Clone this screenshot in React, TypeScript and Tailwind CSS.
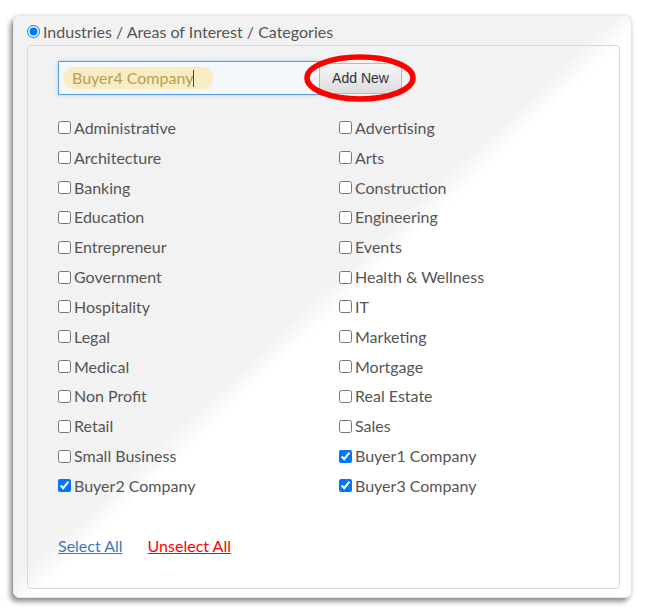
const LEFT = [
  { label: 'Administrative' },
  { label: 'Architecture' },
  { label: 'Banking' },
  { label: 'Education' },
  { label: 'Entrepreneur' },
  { label: 'Government' },
  { label: 'Hospitality' },
  { label: 'Legal' },
  { label: 'Medical' },
  { label: 'Non Profit' },
  { label: 'Retail' },
  { label: 'Small Business' },
  { label: 'Buyer2 Company', checked: true },
];

const RIGHT = [
  { label: 'Advertising' },
  { label: 'Arts' },
  { label: 'Construction' },
  { label: 'Engineering' },
  { label: 'Events' },
  { label: 'Health & Wellness' },
  { label: 'IT' },
  { label: 'Marketing' },
  { label: 'Mortgage' },
  { label: 'Real Estate' },
  { label: 'Sales' },
  { label: 'Buyer1 Company', checked: true },
  { label: 'Buyer3 Company', checked: true },
];

type Item = { label: string; checked?: boolean };

function CheckRow({ item }: { item: Item }) {
  return (
    <label className="flex items-center h-[29.83px]">
      <input type="checkbox" defaultChecked={item.checked} className="m-0 w-[13px] h-[13px]" />
      <span className="ml-[3px]">{item.label}</span>
    </label>
  );
}

export default function App() {
  return (
    <div className="w-[646px] h-[615px] bg-white pt-[15px] pl-[13px] font-['Lato','Noto_Sans',sans-serif] text-[16px] text-[#555]">
      <div className="w-[619px] h-[583px] rounded-[7px] border border-[#e6e6e6] bg-[linear-gradient(to_bottom_right,#f2f2f2_48.5%,#ffffff_51.5%)] shadow-[-3px_4px_5px_rgba(0,0,0,0.4),0_0_4px_rgba(0,0,0,0.12)] pl-[13px] pr-[11px] pb-[8px] flex flex-col">
        {/* heading with radio */}
        <label className="flex items-center h-[29px] pt-[4px] pb-[2px]">
          <input type="radio" defaultChecked className="m-0 w-[13px] h-[13px]" />
          <span className="ml-[3px]">Industries / Areas of Interest / Categories</span>
        </label>

        <div className="flex-1 rounded-[4px] border border-[#d9d9d9] pl-[30px] pt-[15px]">
          {/* input + add new */}
          <div className="relative flex items-center">
            <div className="w-[262px] h-[34px] border border-[#5b9ee0] shadow-[0_0_4px_rgba(100,160,230,0.45)] bg-[#f4f7fb] flex items-center pl-[4px]">
              <span className="h-[22px] w-[150px] rounded-full bg-[#f8edc2] text-[#b5a055] pl-[9px] flex items-center">
                Buyer4 Company
                <span className="inline-block w-px h-[17px] bg-[#444]" />
              </span>
            </div>
            <button className="ml-[-1px] h-[31px] w-[83px] rounded-r-[3px] border border-[#b9b9b9] bg-[linear-gradient(to_bottom,#f7f7f7,#dcdcdc)] font-['Liberation_Sans',sans-serif] text-[14px] text-[#333]">
              Add New
            </button>
            <svg className="absolute left-[245px] top-[-8px] pointer-events-none" width="114" height="50" viewBox="0 0 114 50">
              <ellipse cx="57" cy="25" rx="53" ry="21" fill="none" stroke="#ff0000" strokeWidth="5.5" />
            </svg>
          </div>

          {/* category checkboxes */}
          <div className="grid grid-cols-[281px_1fr] mt-[18px]">
            <div className="flex flex-col">
              {LEFT.map((item) => (
                <CheckRow key={item.label} item={item} />
              ))}
            </div>
            <div className="flex flex-col">
              {RIGHT.map((item) => (
                <CheckRow key={item.label} item={item} />
              ))}
            </div>
          </div>

          <div className="flex gap-[25px] mt-[33px]">
            <a href="#" className="underline text-[#3b78bf]">Select All</a>
            <a href="#" className="underline text-[#ff0000]">Unselect All</a>
          </div>
        </div>
      </div>
    </div>
  );
}
